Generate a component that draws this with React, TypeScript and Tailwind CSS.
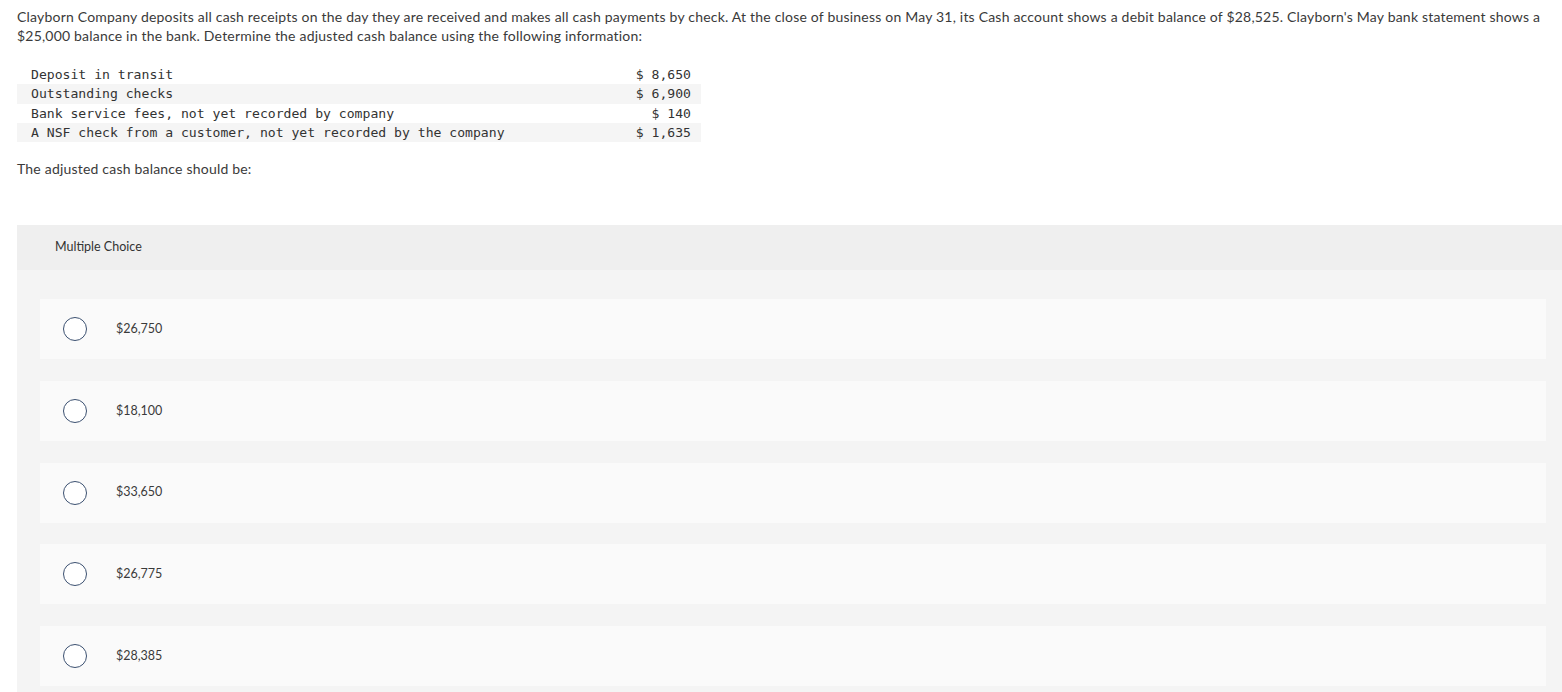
import React from 'react';

// --- Datos de la pregunta ---
const rows = [
  { label: 'Deposit in transit', amount: '$ 8,650' },
  { label: 'Outstanding checks', amount: '$ 6,900' },
  { label: 'Bank service fees, not yet recorded by company', amount: '$ 140' },
  { label: 'A NSF check from a customer, not yet recorded by the company', amount: '$ 1,635' },
];

const choices = ['$26,750', '$18,100', '$33,650', '$26,775', '$28,385'];

const sans = "font-['Lato','Liberation_Sans',sans-serif]";

// --- Opción de respuesta ---
function Choice({ text }: { text: string }) {
  return (
    <label className="flex h-[60px] cursor-pointer items-center bg-[#fafafa] pl-[23px]">
      <span className="block h-6 w-6 rounded-full border-[1.5px] border-[#3b5070] bg-white" />
      <span className={`ml-[29px] text-[12.5px] text-[#3a3a3a] ${sans}`}>{text}</span>
    </label>
  );
}

export default function App() {
  return (
    <div className={`h-screen overflow-hidden bg-white text-[#3a3a3a] ${sans}`}>
      <p className="pl-[17px] pr-[12px] pt-[7px] text-[14px] leading-[19px] tracking-[0.2px]">
        Clayborn Company deposits all cash receipts on the day they are received and makes all cash
        payments by check. At the close of business on May 31, its Cash account shows a debit balance
        of $28,525. Clayborn's May bank statement shows a $25,000 balance in the bank. Determine the
        adjusted cash balance using the following information:
      </p>

      {/* Tabla de datos */}
      <table className="ml-[17px] mt-[20px] w-[684px] border-collapse font-['DejaVu_Sans_Mono',monospace] text-[13.12px] text-[#333]">
        <tbody>
          {rows.map((r, i) => (
            <tr key={r.label} className={i % 2 === 1 ? 'bg-[#f5f5f5]' : 'bg-white'}>
              <td className="h-[19.3px] py-0 pl-[14px] leading-[19px]">{r.label}</td>
              <td className="h-[19.3px] py-0 pr-[10px] text-right leading-[19px]">{r.amount}</td>
            </tr>
          ))}
        </tbody>
      </table>

      <p className="px-[17px] pt-[17px] text-[14px] leading-[19px] tracking-[0.2px]">
        The adjusted cash balance should be:
      </p>

      {/* Multiple choice */}
      <section className="ml-[17px] mt-[47px] bg-[#f4f4f4]">
        <div className="flex h-[45px] items-center bg-[#efefef] pl-[38px] text-[12.5px] text-[#333]">
          Multiple Choice
        </div>
        <div className="flex flex-col gap-[21.75px] pb-[23px] pl-[23px] pr-[16px] pt-[29px]">
          {choices.map((c) => (
            <Choice key={c} text={c} />
          ))}
        </div>
      </section>
    </div>
  );
}
